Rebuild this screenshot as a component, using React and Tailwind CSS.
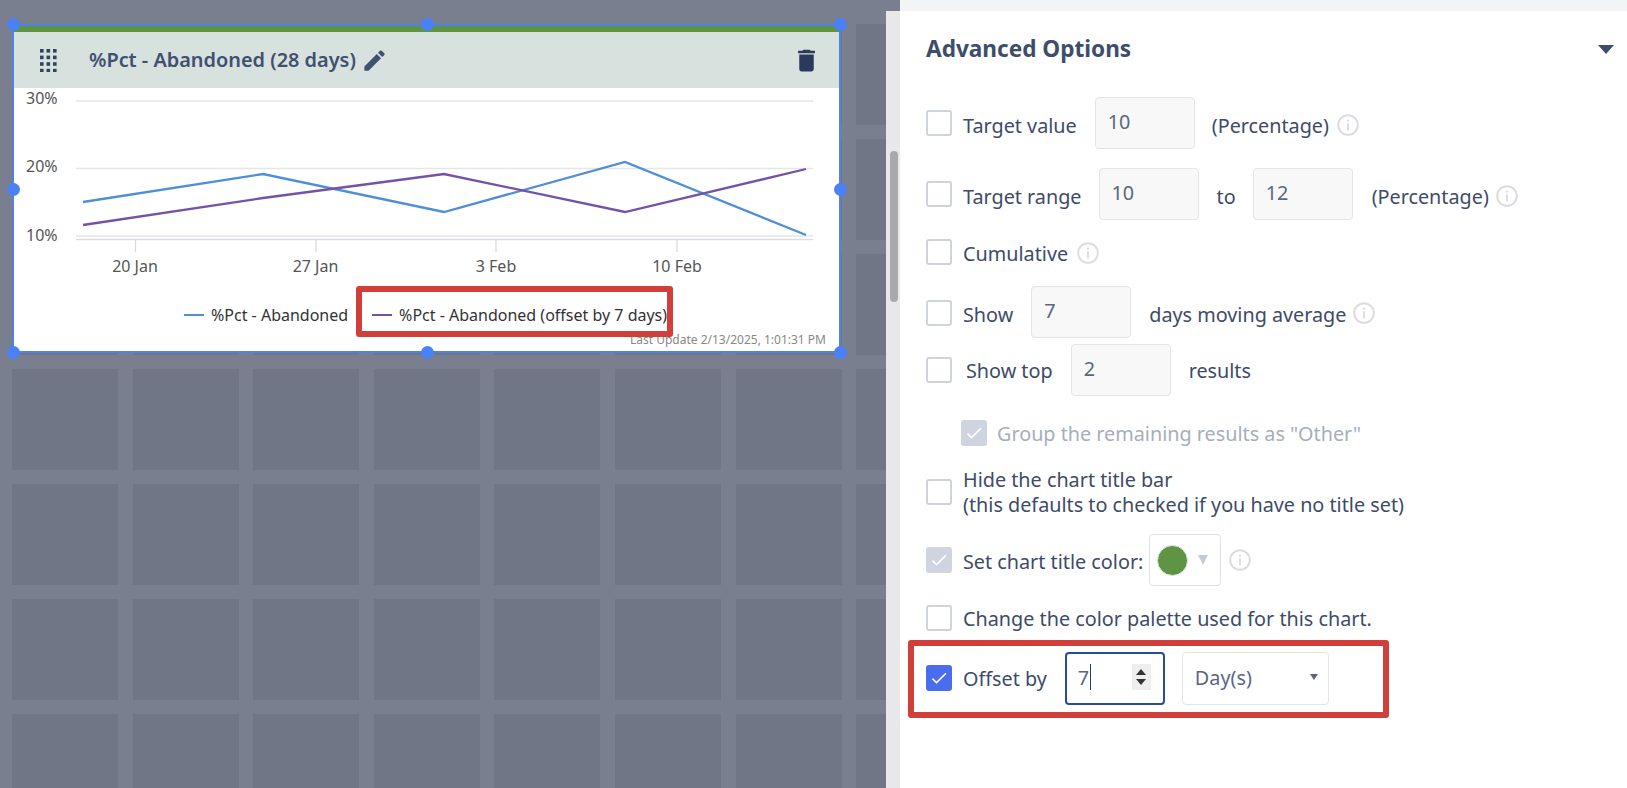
import React from "react";
import { MdEdit, MdDelete, MdCheck } from "react-icons/md";

function Checkbox({ state = "off", className = "" }) {
  const cls =
    state === "on"
      ? "bg-[#4a6df0] border-[#4a6df0]"
      : state === "dim"
      ? "bg-[#ced5e1] border-[#ced5e1]"
      : "bg-white border-[#cfd3da]";
  return (
    <span className={`flex h-[26px] w-[26px] shrink-0 items-center justify-center rounded-[3px] border-2 ${cls} ${className}`}>
      {state !== "off" && <MdCheck className="h-[20px] w-[20px] text-white" />}
    </span>
  );
}

function Field({ value, className = "" }) {
  return (
    <span className={`flex h-[52px] w-[100px] shrink-0 items-center rounded-[4px] border border-[#e4e5e8] bg-[#f8f8f8] pb-[3px] pl-[12px] text-[#5a6780] ${className}`}>
      {value}
    </span>
  );
}

function Info({ className = "" }) {
  return (
    <svg viewBox="0 0 22 22" className={`h-[22px] w-[22px] shrink-0 ${className}`} fill="none">
      <circle cx="11" cy="11" r="9.8" stroke="#dcdde0" strokeWidth="2" />
      <circle cx="11" cy="6.6" r="1.2" fill="#dcdde0" />
      <rect x="10" y="9.4" width="2" height="7" fill="#dcdde0" />
    </svg>
  );
}

function Grip() {
  const dots = [];
  for (let r = 0; r < 4; r++) for (let c = 0; c < 3; c++) dots.push([c, r]);
  return (
    <svg width="17" height="23" viewBox="0 0 17 23" className="shrink-0">
      {dots.map(([c, r]) => (
        <rect key={`${c}-${r}`} x={c * 6.5} y={r * 6.6} width="3.6" height="3.6" fill="#33425f" />
      ))}
    </svg>
  );
}

function Handle({ className }) {
  return <span className={`absolute h-[13px] w-[13px] rounded-full bg-[#4a80f8] ${className}`} />;
}

const OX = 14;
const OY = 88;
const pts = (arr) => arr.map(([x, y]) => `${x - OX},${y - OY}`).join(" ");

function Chart() {
  const blue = [[83, 202], [263, 174], [444, 212], [625, 162], [806, 235]];
  const purple = [[83, 225], [263, 198], [444, 174], [625, 212], [806, 169]];
  const textCls = "fill-[#555555] text-[16px]";
  return (
    <svg width="825" height="190" className="block shrink-0 overflow-visible">
      {[101, 168.5, 236].map((y) => (
        <line key={y} x1={76 - OX} x2={813 - OX} y1={y - OY} y2={y - OY} stroke="#e6e6ea" strokeWidth="1.5" />
      ))}
      <line x1={76 - OX} x2={813 - OX} y1={239.5 - OY} y2={239.5 - OY} stroke="#dcdde8" strokeWidth="1.5" />
      {[135.5, 316, 496, 677].map((x) => (
        <line key={x} x1={x - OX} x2={x - OX} y1={240 - OY} y2={252 - OY} stroke="#d5d8e2" strokeWidth="1.2" />
      ))}
      <polyline points={pts(blue)} fill="none" stroke="#4f8fd6" strokeWidth="2.3" />
      <polyline points={pts(purple)} fill="none" stroke="#7651a8" strokeWidth="2.3" />
      <text x={26 - OX} y={104 - OY} className={textCls}>30%</text>
      <text x={26 - OX} y={172 - OY} className={textCls}>20%</text>
      <text x={26 - OX} y={241 - OY} className={textCls}>10%</text>
      {[["20 Jan", 135], ["27 Jan", 315.5], ["3 Feb", 496], ["10 Feb", 677]].map(([t, x]) => (
        <text key={t} x={x - OX} y={272 - OY} textAnchor="middle" className={textCls}>{t}</text>
      ))}
    </svg>
  );
}

function Card() {
  return (
    <div className="absolute left-[12px] top-[24px] flex h-[329px] w-[829px] flex-col border-2 border-[#4d82e6] bg-white">
      <div className="h-[6px] shrink-0 bg-[#5f9444]" />
      <div className="flex h-[56px] shrink-0 items-center bg-[#d7e1de] pl-[26px] pr-[18px] text-[#3f5070]">
        <Grip />
        <span className="ml-[32px] text-[19.9px] font-semibold">%Pct - Abandoned (28 days)</span>
        <MdEdit className="ml-[5px] h-[27px] w-[27px] text-[#3f5070]" />
        <MdDelete className="ml-auto h-[29px] w-[29px] text-[#2b3a5c]" />
      </div>
      <Chart />
      <div className="mt-[27px] flex items-center pl-[170px] text-[16px] leading-[20px] text-[#333333]">
        <span className="h-[2px] w-[20px] bg-[#4f8fd6]" />
        <span className="ml-[7px]">%Pct - Abandoned</span>
        <span className="ml-[24px] h-[2px] w-[20px] bg-[#7651a8]" />
        <span className="ml-[7px]">%Pct - Abandoned (offset by 7 days)</span>
      </div>
      <div className="mt-[7px] pr-[13px] text-right text-[12px] leading-[16px] text-[#888888]">Last Update 2/13/2025, 1:01:31 PM</div>
      <span className="absolute left-[342px] top-[260px] h-[51px] w-[317px] rounded-[3px] border-[6px] border-[#d13f3a]" />
    </div>
  );
}

const cells = Array.from({ length: 64 });

function Canvas() {
  return (
    <div className="relative h-full w-[886px] shrink-0 overflow-hidden bg-[#797f8e]">
      <div className="grid grid-cols-[repeat(8,106px)] gap-x-[14.6px] gap-y-[14px] pl-[12px] pt-[24px]">
        {cells.map((_, i) => (
          <div key={i} className="h-[101px] bg-[#707686]" />
        ))}
      </div>
      <Card />
      <Handle className="left-[7px] top-[18px]" />
      <Handle className="left-[421px] top-[18px]" />
      <Handle className="left-[834px] top-[18px]" />
      <Handle className="left-[7px] top-[183px]" />
      <Handle className="left-[834px] top-[183px]" />
      <Handle className="left-[7px] top-[346px]" />
      <Handle className="left-[421px] top-[346px]" />
      <Handle className="left-[834px] top-[346px]" />
    </div>
  );
}

function Panel() {
  return (
    <div className="relative flex min-w-0 flex-1 flex-col">
      <div className="h-[11px] shrink-0 bg-[#f3f4f6]" />
      <div className="relative flex-1 rounded-tl-[4px] bg-white pl-[26px] text-[19.8px] leading-[25px] text-[#3d4b68]">
        <div className="flex h-[76px] items-center pr-[13px]">
          <span className="pb-[1px] text-[22.6px] font-bold text-[#3d4d6b]">Advanced Options</span>
          <span className="ml-auto h-0 w-0 border-x-[8px] border-t-[9px] border-x-transparent border-t-[#3d4d6b]" />
        </div>

        <div className="mt-[10px] flex h-[52px] items-center">
          <Checkbox />
          <span className="ml-[11px] pt-[4px]">Target value</span>
          <Field value="10" className="ml-[18px]" />
          <span className="ml-[17px] pt-[4px]">(Percentage)</span>
          <Info className="ml-[8px] mt-[4px]" />
        </div>

        <div className="mt-[19px] flex h-[52px] items-center">
          <Checkbox />
          <span className="ml-[11px] pt-[4px]">Target range</span>
          <Field value="10" className="ml-[17px]" />
          <span className="ml-[18px] pt-[4px]">to</span>
          <Field value="12" className="ml-[17px]" />
          <span className="ml-[19px] pt-[4px]">(Percentage)</span>
          <Info className="ml-[7px] mt-[4px]" />
        </div>

        <div className="mt-[19px] flex h-[26px] items-center">
          <Checkbox />
          <span className="ml-[11px] pt-[2px]">Cumulative</span>
          <Info className="ml-[9px] mt-[1px]" />
        </div>

        <div className="mt-[21px] flex h-[52px] items-center">
          <Checkbox className="mt-[2px]" />
          <span className="ml-[11px] pt-[4px]">Show</span>
          <Field value="7" className="ml-[18px]" />
          <span className="ml-[18px] pt-[4px]">days moving average</span>
          <Info className="ml-[7px] mt-[1px]" />
        </div>

        <div className="mt-[6px] flex h-[52px] items-center">
          <Checkbox />
          <span className="ml-[14px]">Show top</span>
          <Field value="2" className="ml-[18px]" />
          <span className="ml-[18px]">results</span>
        </div>

        <div className="ml-[35px] mt-[23px] flex h-[28px] items-center text-[#a6aebc]">
          <Checkbox state="dim" />
          <span className="ml-[10px]">Group the remaining results as "Other"</span>
        </div>

        <div className="mt-[20px] flex h-[50px] items-center">
          <Checkbox />
          <span className="ml-[11px]">
            Hide the chart title bar
            <br />
            (this defaults to checked if you have no title set)
          </span>
        </div>

        <div className="mt-[17px] flex h-[52px] items-center">
          <Checkbox state="dim" />
          <span className="ml-[11px] pt-[2px]">Set chart title color:</span>
          <span className="ml-[6px] flex h-[52px] w-[72px] shrink-0 items-center rounded-[4px] border border-[#dfe1e5] pl-[7px]">
            <span className="h-[31px] w-[31px] rounded-full border border-[#dcebd4] bg-[#5f9444]" />
            <span className="ml-[10px] h-0 w-0 border-x-[5px] border-t-[10px] border-x-transparent border-t-[#c4cad6]" />
          </span>
          <Info className="ml-[8px]" />
        </div>

        <div className="mt-[19px] flex h-[26px] items-center">
          <Checkbox />
          <span className="ml-[11px] pt-[1px]">Change the color palette used for this chart.</span>
        </div>

        <div className="mt-[20px] flex h-[54px] items-center">
          <Checkbox state="on" />
          <span className="ml-[11px]">Offset by</span>
          <span className="ml-[18px] flex h-[53px] w-[100px] shrink-0 items-center rounded-[4px] border-2 border-[#2a4c9a] pb-[2px] pl-[11px] text-[#5a6780]">
            7
            <span className="ml-px h-[26px] w-px bg-[#2a3f6b]" />
            <span className="ml-auto mr-[12px] flex h-[26px] w-[19px] flex-col items-center justify-center gap-[4px] bg-[#eeeeee]">
              <span className="h-0 w-0 border-x-[5px] border-b-[6px] border-x-transparent border-b-[#333333]" />
              <span className="h-0 w-0 border-x-[5px] border-t-[6px] border-x-transparent border-t-[#333333]" />
            </span>
          </span>
          <span className="ml-[17px] flex h-[53px] w-[147px] shrink-0 items-center rounded-[4px] border border-[#e3e4e8] pb-[2px] pl-[12px] pr-[10px] text-[#5a6780]">
            Day(s)
            <span className="ml-auto h-0 w-0 border-x-[4.5px] border-t-[6px] border-x-transparent border-t-[#5a6780]" />
          </span>
        </div>

        <span className="absolute left-[8px] top-[629px] h-[78px] w-[481px] rounded-[3px] border-[6px] border-[#d13f3a]" />
      </div>
    </div>
  );
}

export default function App() {
  return (
    <div className="flex h-[788px] w-[1627px] overflow-hidden bg-white font-['Noto_Sans','Open_Sans',sans-serif]">
      <Canvas />
      <div className="flex w-[14px] shrink-0 flex-col">
        <div className="h-[11px] shrink-0 bg-[#797f8e]" />
        <div className="flex-1 bg-[#e8e8e8] px-[4px] pt-[140px]">
          <div className="h-[151px] w-[8px] rounded-full bg-[#a9a9a9]" />
        </div>
      </div>
      <Panel />
    </div>
  );
}
